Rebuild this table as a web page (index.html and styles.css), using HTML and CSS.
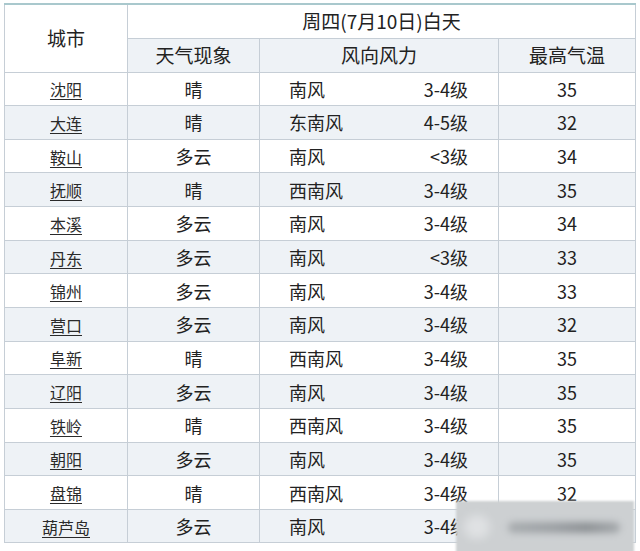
FILE: index.html
```html
<!DOCTYPE html>
<html lang="zh-CN">
<head>
<meta charset="utf-8">
<link rel="stylesheet" href="styles.css">
</head>
<body>
<div class="page">
<table class="wx">
  <colgroup>
    <col class="c-city"><col class="c-sky"><col class="c-wind"><col class="c-temp">
  </colgroup>
  <thead>
    <tr class="h1">
      <th rowspan="2" class="city-h">城市</th>
      <th colspan="3">周四(7月10日)白天</th>
    </tr>
    <tr class="h2">
      <th>天气现象</th>
      <th>风向风力</th>
      <th>最高气温</th>
    </tr>
  </thead>
  <tbody>
    <tr><td class="city"><a>沈阳</a></td><td>晴</td><td class="wind"><span>南风</span><span>3-4级</span></td><td>35</td></tr>
    <tr><td class="city"><a>大连</a></td><td>晴</td><td class="wind"><span>东南风</span><span>4-5级</span></td><td>32</td></tr>
    <tr><td class="city"><a>鞍山</a></td><td>多云</td><td class="wind"><span>南风</span><span>&lt;3级</span></td><td>34</td></tr>
    <tr><td class="city"><a>抚顺</a></td><td>晴</td><td class="wind"><span>西南风</span><span>3-4级</span></td><td>35</td></tr>
    <tr><td class="city"><a>本溪</a></td><td>多云</td><td class="wind"><span>南风</span><span>3-4级</span></td><td>34</td></tr>
    <tr><td class="city"><a>丹东</a></td><td>多云</td><td class="wind"><span>南风</span><span>&lt;3级</span></td><td>33</td></tr>
    <tr><td class="city"><a>锦州</a></td><td>多云</td><td class="wind"><span>南风</span><span>3-4级</span></td><td>33</td></tr>
    <tr><td class="city"><a>营口</a></td><td>多云</td><td class="wind"><span>南风</span><span>3-4级</span></td><td>32</td></tr>
    <tr><td class="city"><a>阜新</a></td><td>晴</td><td class="wind"><span>西南风</span><span>3-4级</span></td><td>35</td></tr>
    <tr><td class="city"><a>辽阳</a></td><td>多云</td><td class="wind"><span>南风</span><span>3-4级</span></td><td>35</td></tr>
    <tr><td class="city"><a>铁岭</a></td><td>晴</td><td class="wind"><span>西南风</span><span>3-4级</span></td><td>35</td></tr>
    <tr><td class="city"><a>朝阳</a></td><td>多云</td><td class="wind"><span>南风</span><span>3-4级</span></td><td>35</td></tr>
    <tr><td class="city"><a>盘锦</a></td><td>晴</td><td class="wind"><span>西南风</span><span>3-4级</span></td><td>32</td></tr>
    <tr><td class="city"><a>葫芦岛</a></td><td>多云</td><td class="wind"><span>南风</span><span>3-4级</span></td><td>35</td></tr>
  </tbody>
</table>
<div class="watermark"><div class="wm-dot"></div><div class="wm-text"></div></div>
</div>
</body>
</html>
```
FILE: styles.css
```css
html, body {
  margin: 0;
  padding: 0;
  background: #ffffff;
}
.page {
  position: relative;
  width: 640px;
  height: 551px;
  overflow: hidden;
  padding: 3px 0 0 4px;
  box-sizing: border-box;
  font-family: "Noto Sans CJK SC", "Noto Sans", sans-serif;
  color: #222;
}
.wx {
  border-collapse: collapse;
  table-layout: fixed;
  width: 632px;
  border-top: 2px solid #a9c8cd;
}
.c-city { width: 123px; }
.c-sky { width: 132px; }
.c-wind { width: 239px; }
.c-temp { width: 137px; }
.wx th, .wx td {
  border: 1px solid #c6ced6;
  padding: 0;
  text-align: center;
  vertical-align: middle;
  font-weight: normal;
  font-size: 18px;
  line-height: 20px;
  white-space: nowrap;
}
.wx th { font-size: 19px; color: #222; }
.h1 { height: 34px; }
.h1 th { background: #ffffff; }
.h2 { height: 34px; }
.h2 th { background: #eef2f6; }
.h1 th.city-h { background: #ffffff; }
.wx tbody tr { height: 33.65px; }
.wx tbody tr:nth-child(even) td { background: #eef2f6; }
.city a {
  font-size: 16px;
  color: #2a2a2a;
  text-decoration: underline;
  text-underline-offset: 3px;
  text-decoration-thickness: 1px;
}
.wx td.wind {
  text-align: left;
}
.wind {
  padding: 0 30px 0 29px !important;
}
.wind span:first-child { float: left; }
.wind span:last-child { float: right; }
.watermark {
  position: absolute;
  left: 456px;
  top: 501px;
  width: 178px;
  height: 52px;
  background: #cdd0d2;
  filter: blur(1px);
}
.wm-dot {
  position: absolute;
  left: 8px;
  top: 14px;
  width: 26px;
  height: 24px;
  border-radius: 50%;
  background: #dfe1e3;
  filter: blur(5px);
}
.wm-text {
  position: absolute;
  left: 52px;
  top: 21px;
  width: 112px;
  height: 11px;
  border-radius: 6px;
  background: linear-gradient(90deg, #a9adb0 0%, #9da1a5 40%, #8f9397 70%, #a6aaad 100%);
  filter: blur(3px);
}
```
